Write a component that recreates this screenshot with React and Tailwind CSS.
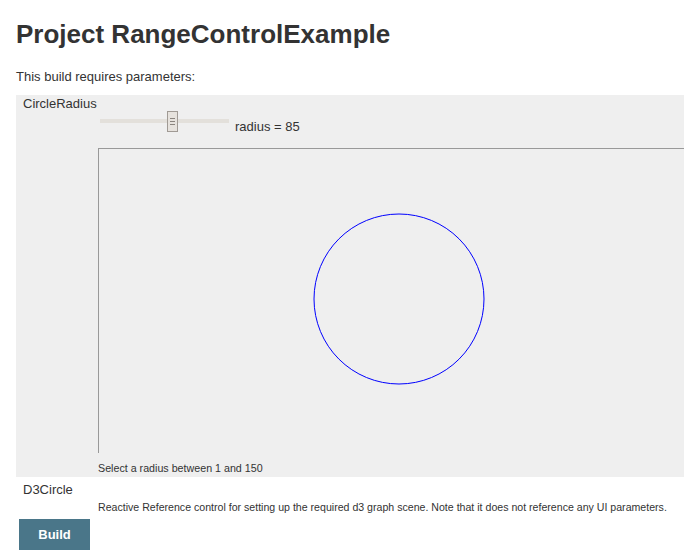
import React from "react";

export default function App() {
  return (
    <div className="w-[684px] h-[557px] overflow-hidden bg-white text-[#333] pl-4" style={{ fontFamily: '"Liberation Sans", Arial, sans-serif' }}>
      <h1 className="text-[26px] font-bold leading-none pt-[21px] m-0">Project RangeControlExample</h1>
      <p className="text-[13px] leading-[15px] mt-[22px]">This build requires parameters:</p>
      <div className="mt-[11px] bg-[#efefef] w-[668px] h-[382px] flex flex-col">
        <div className="text-[13px] leading-[15px] pl-[7px] pt-[1px]">CircleRadius</div>
        <div className="pl-[82px] flex flex-col">
          <div className="flex items-start h-[21px]">
            <div className="relative w-[131px] h-[21px]">
              <div className="absolute left-[2px] right-0 top-[8px] h-[4px] bg-[#e3e0db]" />
              <div className="absolute left-[69px] top-0 w-[11px] h-[21px] bg-[#e6e2dd] border border-[#a09a94] flex flex-col items-center justify-center gap-[2px]">
                <div className="w-[5px] h-px bg-[#8a847e]" />
                <div className="w-[5px] h-px bg-[#8a847e]" />
                <div className="w-[5px] h-px bg-[#8a847e]" />
              </div>
            </div>
            <span className="ml-[6px] mt-[8px] text-[13px] leading-[15px]">radius = 85</span>
          </div>
          <div className="mt-[16px] w-[600px] h-[305px] border-l border-t border-[#999] overflow-hidden">
            <svg width="600" height="304" className="block">
              <circle cx="300" cy="150" r="85" fill="none" stroke="blue" strokeWidth="1" />
            </svg>
          </div>
          <div className="text-[10.7px] leading-[12px] mt-[9px] whitespace-nowrap">Select a radius between 1 and 150</div>
        </div>
      </div>
      <div className="text-[13px] leading-[15px] pl-[7px] mt-[5px]">D3Circle</div>
      <div className="text-[10.6px] leading-[12px] pl-[82px] mt-[4px] whitespace-nowrap">Reactive Reference control for setting up the required d3 graph scene. Note that it does not reference any UI parameters.</div>
      <button className="mt-[6px] ml-[3px] w-[71px] h-[31px] bg-[#4a7689] text-white text-[13px] font-bold flex items-center justify-center">Build</button>
    </div>
  );
}
